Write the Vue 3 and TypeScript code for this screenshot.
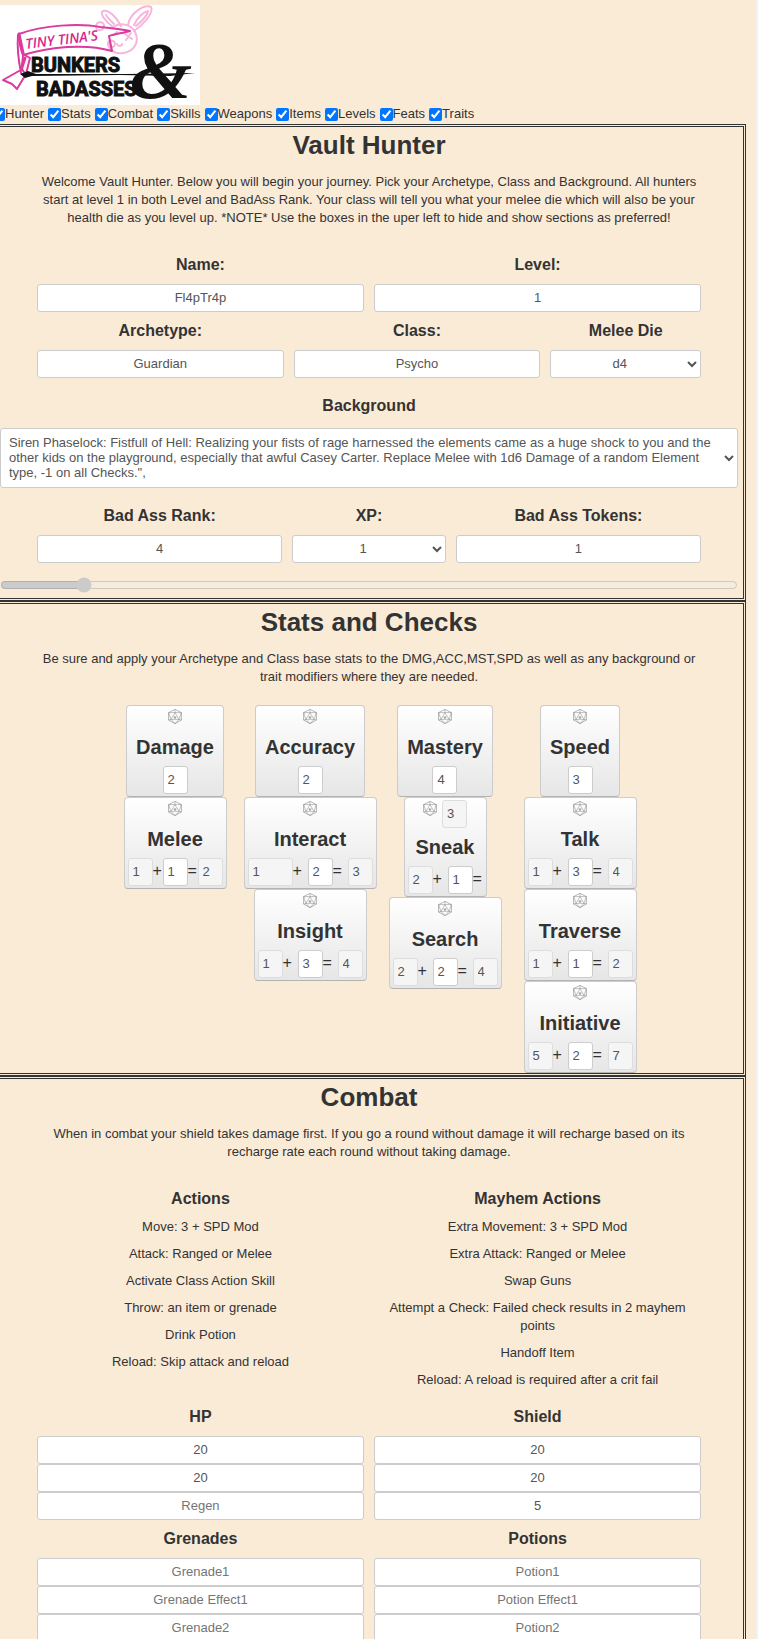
<script setup lang="ts">
import { reactive, ref } from 'vue'

interface Toggle { name: string; shown: boolean }
interface Part { value: string; locked: boolean; wide?: boolean; label: string }
interface Stat { name: string; parts: Part[]; tight?: boolean; total?: string }

const toggles = reactive<Toggle[]>(
  ['Hunter', 'Stats', 'Combat', 'Skills', 'Weapons', 'Items', 'Levels', 'Feats', 'Traits'].map(name => ({ name, shown: true })),
)

const shown = (name: string) => toggles.find(t => t.name === name)!.shown

const hunter = reactive({
  name: 'Fl4pTr4p', level: '1', archetype: 'Guardian', klass: 'Psycho', die: 'd4', rank: '4', xp: '1', tokens: '1',
})

const background = ref('Siren')
const backgroundText =
  'Siren Phaselock: Fistfull of Hell: Realizing your fists of rage harnessed the elements came as a huge shock to you and the other kids on the playground, especially that awful Casey Carter. Replace Melee with 1d6 Damage of a random Element type, -1 on all Checks.",'

const base = (name: string, value: string): Stat => ({ name, parts: [{ value, locked: false, label: name }] })

const check = (name: string, from: string, mod: string, sum?: string, extra: Partial<Stat> = {}, wide = false): Stat => {
  const parts: Part[] = [
    { value: from, locked: true, wide, label: name + ' base' },
    { value: mod, locked: false, label: name + ' modifier' },
  ]
  if (sum) parts.push({ value: sum, locked: true, label: name + ' total' })
  return { name, parts, ...extra }
}

const columns = reactive<Stat[][]>([
  [base('Damage', '2'), check('Melee', '1', '1', '2', { tight: true })],
  [base('Accuracy', '2'), check('Interact', '1', '2', '3', {}, true), check('Insight', '1', '3', '4')],
  [base('Mastery', '4'), check('Sneak', '2', '1', undefined, { total: '3' }), check('Search', '2', '2', '4')],
  [base('Speed', '3'), check('Talk', '1', '3', '4'), check('Traverse', '1', '1', '2'), check('Initiative', '5', '2', '7')],
])

const actions = [
  {
    title: 'Actions',
    items: ['Move: 3 + SPD Mod', 'Attack: Ranged or Melee', 'Activate Class Action Skill', 'Throw: an item or grenade', 'Drink Potion', 'Reload: Skip attack and reload'],
  },
  {
    title: 'Mayhem Actions',
    items: ['Extra Movement: 3 + SPD Mod', 'Extra Attack: Ranged or Melee', 'Swap Guns', 'Attempt a Check: Failed check results in 2 mayhem points', 'Handoff Item', 'Reload: A reload is required after a crit fail'],
  },
]

const pools = reactive([
  { title: 'HP', fields: [{ hint: 'Max', value: '20' }, { hint: 'Current', value: '20' }, { hint: 'Regen', value: '' }] },
  { title: 'Shield', fields: [{ hint: 'Max', value: '20' }, { hint: 'Current', value: '20' }, { hint: 'Regen', value: '5' }] },
  { title: 'Grenades', fields: [{ hint: 'Grenade1', value: '' }, { hint: 'Grenade Effect1', value: '' }, { hint: 'Grenade2', value: '' }] },
  { title: 'Potions', fields: [{ hint: 'Potion1', value: '' }, { hint: 'Potion Effect1', value: '' }, { hint: 'Potion2', value: '' }] },
])
</script>

<template>
  <div class="page">
    <div class="sheet">
      <svg class="logo" viewBox="0 0 200 100" role="img" aria-label="Tiny Tina's Bunkers &amp; Badasses">
        <rect width="200" height="100" fill="#fff" />
        <g fill="none" stroke="#f7b5dc" stroke-width="2" stroke-linecap="round" stroke-linejoin="round">
          <path d="M113 22 C105 16 99 8 103 6 C109 4 117 13 121 21" />
          <path d="M114 19 C110 15 106 11 106 10 M128 20 C130 8 144 -1 151 2 C154 8 143 20 134 26" />
          <path d="M134 20 C137 13 143 7 148 6 C147 12 141 17 136 21" />
          <path d="M113 22 C120 17 131 19 135 27 C140 37 134 46 124 48 C113 50 107 42 109 38" />
          <path d="M96 22 C96 16 103 16 104 20 C104 26 97 27 96 22 M108 38 C108 34 115 35 115 39 C115 43 108 43 108 38" />
          <path d="M125 29 L132 34 M131 28 L126 35 M117 39 C118 42 122 41 122 39 M114 30 L117 27" />
        </g>
        <g fill="none" stroke="#dc3a9f" stroke-width="2" stroke-linejoin="round" stroke-linecap="round">
          <path d="M19 29 C43 20 80 18 100 22 C111 23 121 24 130 26 C123 28 115 29 109 31 L112 46 C85 38 50 42 23 50 C20 43 19 36 19 29 Z" />
          <path d="M18 30 C17 43 19 58 21 68 M23 49 L30 53 L26 69 L17 84 L12 79 L3 75 L19 66 M23 50 C23 57 20 64 24 67" />
          <path d="M25 53 L22 62 M19 29 L23 48" stroke-width="3" />
        </g>
        <text class="logo-script" x="26" y="44" transform="rotate(-7 26 44)">TINY TINA'S</text>
        <text class="logo-word" x="31" y="67">BUNKERS</text>
        <text class="logo-word" x="36" y="91">BADASSES</text>
        <text class="logo-amp" x="130" y="93">&amp;</text>
        <path d="M20 69 L28 66 L36 69 L126 69 L195 68 L170 71 L120 70 L32 71 L25 73 Z" fill="#111" />
      </svg>

      <div class="toggles">
        <label v-for="t in toggles" :key="t.name"><input v-model="t.shown" type="checkbox" />{{ t.name }}</label>
      </div>

      <section v-if="shown('Hunter')">
        <h1>Vault Hunter</h1>
        <p class="intro">
          Welcome Vault Hunter. Below you will begin your journey. Pick your Archetype, Class and Background. All hunters
          start at level 1 in both Level and BadAss Rank. Your class will tell you what your melee die which will also be your
          health die as you level up. *NOTE* Use the boxes in the uper left to hide and show sections as preferred!
        </p>
        <div class="row halves">
          <label class="field"><b>Name:</b><input v-model="hunter.name" type="text" /></label>
          <label class="field"><b>Level:</b><input v-model="hunter.level" type="text" /></label>
        </div>
        <div class="row origin">
          <label class="field"><b>Archetype:</b><input v-model="hunter.archetype" type="text" /></label>
          <label class="field"><b>Class:</b><input v-model="hunter.klass" type="text" /></label>
          <label class="field"><b>Melee Die</b><select v-model="hunter.die"><option>d4</option><option>d6</option><option>d8</option></select></label>
        </div>
        <label class="field background">
          <b>Background</b>
          <select v-model="background"><option value="Siren">{{ backgroundText }}</option></select>
        </label>
        <div class="row ranks">
          <label class="field"><b>Bad Ass Rank:</b><input v-model="hunter.rank" type="text" /></label>
          <label class="field"><b>XP:</b><select v-model="hunter.xp"><option>1</option><option>2</option><option>3</option></select></label>
          <label class="field"><b>Bad Ass Tokens:</b><input v-model="hunter.tokens" type="text" /></label>
        </div>
        <input class="progress" type="range" min="0" max="19" value="2" disabled aria-label="Experience" />
      </section>

      <section v-if="shown('Stats')">
        <h1>Stats and Checks</h1>
        <p class="intro">
          Be sure and apply your Archetype and Class base stats to the DMG,ACC,MST,SPD as well as any background or trait
          modifiers where they are needed.
        </p>
        <div class="stats">
          <div v-for="(column, c) in columns" :key="c" class="stat-column">
            <div v-for="stat in column" :key="stat.name" class="stat">
              <div class="roll">
                <button type="button" :aria-label="'Roll ' + stat.name">
                  <svg viewBox="0 0 14 15" fill="none" stroke="#858585" stroke-width="0.6">
                    <path d="M7 0.4 L13.4 3.6 V11 L7 14.6 L0.6 11 V3.6 Z" />
                    <path d="M7 3.6 L11 10.4 H3 Z M7 0.4 V3.6 M0.6 3.6 L7 3.6 L13.4 3.6 M0.6 3.6 L3 10.4 L0.6 11 M13.4 3.6 L11 10.4 L13.4 11 M3 10.4 L7 14.6 L11 10.4" stroke-width="0.5" />
                    <path d="M5.6 8 H8.4 M6 9 H8" stroke="#555" />
                  </svg>
                </button>
                <input v-if="stat.total" class="small" type="text" :value="stat.total" disabled :aria-label="stat.name + ' total'" />
              </div>
              <h2>{{ stat.name }}</h2>
              <div class="sum" :class="{ tight: stat.tight }">
                <template v-for="(part, i) in stat.parts" :key="i">
                  <input v-model="part.value" class="small" :class="{ wide: part.wide }" type="text" :disabled="part.locked" :aria-label="part.label" />
                  <span v-if="i === 0 && stat.parts.length > 1">+</span>
                  <span v-else-if="i === 1" :class="{ last: !!stat.total }">=</span>
                </template>
              </div>
            </div>
          </div>
        </div>
      </section>

      <section v-if="shown('Combat')">
        <h1>Combat</h1>
        <p class="intro">
          When in combat your shield takes damage first. If you go a round without damage it will recharge based on its
          recharge rate each round without taking damage.
        </p>
        <div class="row halves">
          <div v-for="group in actions" :key="group.title" class="actions">
            <h3>{{ group.title }}</h3>
            <p v-for="item in group.items" :key="item">{{ item }}</p>
          </div>
        </div>
        <div class="row halves">
          <div v-for="pool in pools" :key="pool.title" class="field">
            <h3>{{ pool.title }}</h3>
            <input v-for="f in pool.fields" :key="f.hint" v-model="f.value" type="text" :placeholder="f.hint" :aria-label="pool.title + ' ' + f.hint" />
          </div>
        </div>
      </section>
    </div>
  </div>
</template>

<style>
body {
  margin: 0;
  background: #faebd7;
}
</style>

<style scoped>
* {
  box-sizing: border-box;
}
.page {
  height: 100vh;
  overflow-x: hidden;
  overflow-y: auto;
  scrollbar-width: none;
  border-right: 2px solid #f1f1f1;
  color: #333;
  font: 13px/18px Arial, "Liberation Sans", sans-serif;
}
.sheet {
  margin: 5px 10px 0 -8px;
}
.logo {
  display: block;
  width: 200px;
  height: 100px;
  margin-left: 8px;
}
.logo-script {
  font: italic 600 14px "Open Sans", sans-serif;
  fill: #d6268f;
}
.logo-word {
  font: 700 20px Roboto, sans-serif;
  fill: #111;
  stroke: #111;
}
.logo-amp {
  font: italic 700 80px "Liberation Serif", serif;
  fill: #111;
}
.toggles {
  display: flex;
  gap: 4px;
  padding-bottom: 1px;
}
.toggles label {
  display: flex;
  align-items: center;
}
.toggles input {
  width: 13px;
  height: 13px;
  margin: 0;
}
section {
  border: 3px double #333;
  padding: 0 5px;
  text-align: center;
}
h1,
h2,
h3,
p {
  margin: 0;
}
h1 {
  font-size: 26px;
  line-height: 36px;
}
.intro {
  padding: 10px 5% 19px;
}
.row {
  display: grid;
  column-gap: 10px;
  padding: 0 5%;
}
.halves {
  grid-template-columns: 1fr 1fr;
}
.origin {
  grid-template-columns: 18fr 18fr 11fr;
}
.ranks {
  grid-template-columns: 8fr 5fr 8fr;
}
.field {
  display: flex;
  flex-direction: column;
  min-width: 0;
}
b,
h3 {
  font-size: 16px;
  font-weight: 700;
  line-height: 38px;
}
.field input,
select,
.small {
  width: 100%;
  height: 28px;
  margin: 0;
  padding: 3px 4px 5px;
  border: 1px solid #ccc;
  border-radius: 3px;
  background: #fff;
  color: #555;
  font: 13px/18px Arial, "Liberation Sans", sans-serif;
  text-align: center;
}
.field input::placeholder {
  color: #757575;
}
.background {
  padding: 9px 0;
}
.background b {
  margin-bottom: 3px;
}
.background select {
  height: 60px;
  padding: 5px 4px 7px;
  line-height: 15px;
  text-align: left;
  white-space: pre-wrap;
}
.progress {
  display: block;
  width: 100%;
  height: 16px;
  margin: 14px 0 5px;
}
.stats {
  display: grid;
  grid-template-columns: repeat(4, 135px);
  justify-content: center;
  padding-left: 17px;
}
.stat-column {
  display: flex;
  flex-direction: column;
  align-items: center;
}
.stat {
  padding: 2px 3px;
  border: 1px solid #ccc;
  border-bottom-color: #b3b3b3;
  border-radius: 4px;
  background: linear-gradient(#fff, #e6e6e6);
}
.roll {
  display: flex;
  justify-content: center;
  gap: 5px;
  min-height: 20px;
}
.roll button {
  width: 14px;
  height: 15px;
  margin: 1px 0 0;
  padding: 0;
  border: 0;
  background: none;
}
.roll svg {
  display: block;
  width: 14px;
  height: 15px;
}
h2 {
  padding: 0 6px;
  font-size: 20px;
  line-height: 38px;
}
.sum {
  display: flex;
  justify-content: center;
}
.sum span {
  width: 15px;
  font-size: 16px;
  line-height: 26px;
  text-align: left;
}
.sum.tight span,
.sum span.last {
  width: 10px;
}
.small {
  width: 25px;
  text-align: left;
}
.small.wide {
  width: 45px;
}
.small:disabled {
  border-color: #ddd;
  background: #f5f5f5;
}
.actions p {
  padding-bottom: 9px;
}
</style>
